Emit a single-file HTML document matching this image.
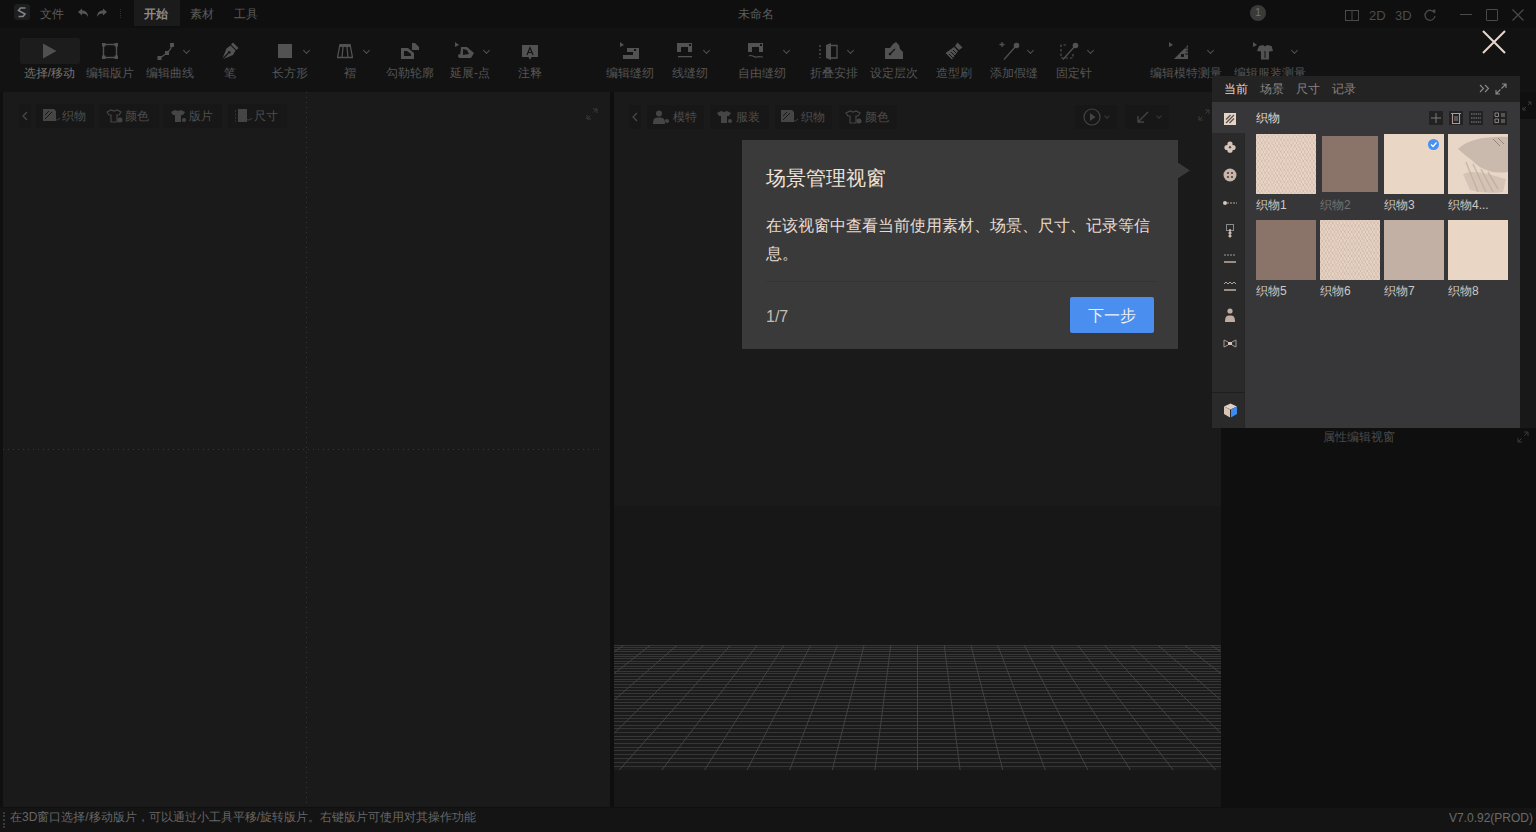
<!DOCTYPE html>
<html><head><meta charset="utf-8">
<style>
*{margin:0;padding:0;box-sizing:border-box}
html,body{width:1536px;height:832px;overflow:hidden;background:#0f0f0f;font-family:"Liberation Sans",sans-serif;position:relative}
.a{position:absolute}
.t{position:absolute;white-space:nowrap;line-height:1}
#title{left:0;top:0;width:1536px;height:27px;background:#0f0f0f}
#toolbar{left:0;top:28px;width:1536px;height:64px;background:#121212}
#lp{left:3px;top:92px;width:607px;height:715px;background:#1a1a1a}
#sep{left:610px;top:92px;width:4px;height:715px;background:#0e0e0e}
#cp{left:614px;top:92px;width:607px;height:715px;background:linear-gradient(#1a1a1a 0,#1a1a1a 414px,#171717 414px,#171717 715px)}
#rp{left:1221px;top:92px;width:315px;height:716px;background:#0f0f0f}
#status{left:0;top:808px;width:1536px;height:24px;background:#141414}
.lbl{font-size:12px;color:#5a5a5a;top:67px;text-align:center;width:90px;margin-left:-45px}
.chev{position:absolute;top:48px;width:5px;height:5px;border-right:1.2px solid #505050;border-bottom:1.2px solid #505050;transform:rotate(45deg)}
.ico{position:absolute}
.c{display:inline-block;width:1em;text-align:center}
</style></head>
<body>
<!-- TITLE BAR -->
<div id="title" class="a">
  <div class="a" style="left:14px;top:4px;width:16px;height:16px;background:#1e1e1e;border-radius:3px"></div>
  <svg class="a" style="left:14px;top:4px" width="16" height="16" viewBox="0 0 16 16"><path d="M11.5 4 H6.5 L4.5 6.5 L11 10 L9 12.5 H4.5" fill="none" stroke="#7e838a" stroke-width="1.7" stroke-linejoin="miter"/></svg>
  <div class="t" style="left:40px;top:8px;font-size:12px;color:#5c5c5c"><span class="c">文</span><span class="c">件</span></div>
  <svg class="a" style="left:77px;top:8px" width="12" height="10" viewBox="0 0 12 10"><path d="M1 4 L5 0.5 V2.5 C9 2.5 11 5 11 9 C10 6.5 8 5.5 5 5.5 V7.5 Z" fill="#555"/></svg>
  <svg class="a" style="left:96px;top:8px" width="12" height="10" viewBox="0 0 12 10"><path d="M11 4 L7 0.5 V2.5 C3 2.5 1 5 1 9 C2 6.5 4 5.5 7 5.5 V7.5 Z" fill="#555"/></svg>
  <div class="a" style="left:120px;top:9px;width:1px;height:9px;border-left:1px dotted #2e2e2e"></div>
  <div class="a" style="left:134px;top:0;width:46px;height:26px;background:#1b1b1b"></div>
  <div class="t" style="left:144px;top:8px;font-size:12px;color:#8a8a8a;font-weight:bold"><span class="c">开</span><span class="c">始</span></div>
  <div class="t" style="left:190px;top:8px;font-size:12px;color:#5a5a5a"><span class="c">素</span><span class="c">材</span></div>
  <div class="t" style="left:234px;top:8px;font-size:12px;color:#5a5a5a"><span class="c">工</span><span class="c">具</span></div>
  <div class="t" style="left:738px;top:8px;font-size:12px;color:#5c5c5c"><span class="c">未</span><span class="c">命</span><span class="c">名</span></div>
  <div class="a" style="left:1250px;top:5px;width:16px;height:16px;border-radius:50%;background:#3a3a3a"></div>
  <div class="t" style="left:1250px;top:7px;width:16px;text-align:center;font-size:11px;color:#707070">1</div>
  <svg class="a" style="left:1345px;top:10px" width="14" height="11" viewBox="0 0 14 11"><rect x="0.5" y="0.5" width="13" height="10" fill="none" stroke="#4a4a4a"/><line x1="7" y1="0.5" x2="7" y2="10.5" stroke="#4a4a4a"/></svg>
  <div class="t" style="left:1369px;top:9px;font-size:13px;color:#4c4c4c">2D</div>
  <div class="t" style="left:1395px;top:9px;font-size:13px;color:#4c4c4c">3D</div>
  <svg class="a" style="left:1423px;top:8px" width="14" height="14" viewBox="0 0 14 14"><path d="M11.5 5 A5 5 0 1 0 12 8" fill="none" stroke="#4a4a4a" stroke-width="1.3"/><path d="M9 2 L12.5 1.5 L12 5.5 Z" fill="#4a4a4a"/></svg>
  <div class="a" style="left:1460px;top:14px;width:12px;height:1px;background:#4a4a4a"></div>
  <div class="a" style="left:1486px;top:9px;width:12px;height:12px;border:1.3px solid #4a4a4a;border-radius:1px"></div>
  <svg class="a" style="left:1512px;top:9px" width="12" height="12" viewBox="0 0 12 12"><path d="M0.5 0.5 L11.5 11.5 M11.5 0.5 L0.5 11.5" stroke="#4a4a4a" stroke-width="1.2"/></svg>
</div>
<!-- TOOLBAR -->
<div id="toolbar" class="a"></div>
<div id="tb" class="a" style="left:0;top:0;width:1536px;height:92px">
  <div class="a" style="left:20px;top:38px;width:60px;height:26px;background:#1c1c1c;border-radius:2px"></div>
  <div class="t lbl" style="left:49.5px;color:#747474"><span class="c">选</span><span class="c">择</span>/<span class="c">移</span><span class="c">动</span></div>
  <svg class="a" style="left:42px;top:43px" width="15" height="16" viewBox="0 0 15 16"><path d="M1 0.5 L14.5 8 L1 15.5 Z" fill="#505050"/></svg>
  <div class="t lbl" style="left:110px;color:#555"><span class="c">编</span><span class="c">辑</span><span class="c">版</span><span class="c">片</span></div>
  <svg class="a" style="left:102px;top:43px" width="16" height="16" viewBox="0 0 16 16"><rect x="1.5" y="1.5" width="13" height="13" fill="none" stroke="#525252" stroke-width="1.4"/><rect x="0" y="0" width="3.5" height="3.5" fill="#525252"/><rect x="12.5" y="0" width="3.5" height="3.5" fill="#525252"/><rect x="0" y="12.5" width="3.5" height="3.5" fill="#525252"/><rect x="12.5" y="12.5" width="3.5" height="3.5" fill="#525252"/></svg>
  <div class="t lbl" style="left:170px;color:#555"><span class="c">编</span><span class="c">辑</span><span class="c">曲</span><span class="c">线</span></div>
  <svg class="a" style="left:157px;top:43px" width="17" height="17" viewBox="0 0 17 17"><path d="M3 15 L10 10 C13 7 15 4 15 2" fill="none" stroke="#525252" stroke-width="1.2"/><rect x="0.5" y="13" width="4" height="4" fill="#525252"/><rect x="8" y="8" width="4" height="4" fill="#525252"/><rect x="13" y="0" width="4" height="4" fill="#525252"/></svg>
  <div class="chev" style="left:184px"></div>
  <div class="t lbl" style="left:230px;color:#555"><span class="c">笔</span></div>
  <svg class="a" style="left:221px;top:42px" width="18" height="18" viewBox="0 0 18 18"><path d="M12 0.5 L17.5 6 L15.5 8 L10 2.5 Z" fill="#525252"/><path d="M9.5 3.5 L14.5 8.5 L12 13 L1 17.5 L5.5 6.5 Z" fill="#525252"/><path d="M1 17.5 L7.5 11" stroke="#131313" stroke-width="1.2"/><circle cx="8.3" cy="10.2" r="1.3" fill="#131313"/></svg>
  <div class="t lbl" style="left:290px;color:#555"><span class="c">长</span><span class="c">方</span><span class="c">形</span></div>
  <div class="a" style="left:278px;top:44px;width:14px;height:14px;background:#525252"></div>
  <div class="chev" style="left:304px"></div>
  <div class="t lbl" style="left:350px;color:#555"><span class="c">褶</span></div>
  <svg class="a" style="left:337px;top:44px" width="16" height="15" viewBox="0 0 16 15"><path d="M3 0.5 H13 L15.5 13.5 H0.5 Z" fill="none" stroke="#525252" stroke-width="1.3"/><rect x="3" y="0" width="10" height="3" fill="#525252"/><path d="M6 3 L5 13.5 M10 3 L11 13.5" stroke="#525252" stroke-width="1.3"/></svg>
  <div class="chev" style="left:364px"></div>
  <div class="t lbl" style="left:410px;color:#555"><span class="c">勾</span><span class="c">勒</span><span class="c">轮</span><span class="c">廓</span></div>
  <svg class="a" style="left:401px;top:43px" width="18" height="16" viewBox="0 0 18 16"><path d="M0 5 H7 L13 10 V16 H0 Z" fill="#525252"/><path d="M3 8 H6 L10 11 V13 H3 Z" fill="#131313"/><path d="M11 0 H14 L18 4 V7 H11 Z" fill="#525252"/></svg>
  <div class="t lbl" style="left:470px;color:#555"><span class="c">延</span><span class="c">展</span>-<span class="c">点</span></div>
  <svg class="a" style="left:455px;top:42px" width="20" height="18" viewBox="0 0 20 18"><path d="M0 0 L4 3 L0 5 Z" fill="#525252"/><path d="M6 5 L12 5 L19 11 L16 16 H5 Z" fill="#525252"/><path d="M8 7 L12 8 L14 12 L8 13 Z" fill="#131313"/><circle cx="5" cy="14" r="2" fill="#525252"/></svg>
  <div class="chev" style="left:484px"></div>
  <div class="t lbl" style="left:530px;color:#555"><span class="c">注</span><span class="c">释</span></div>
  <svg class="a" style="left:522px;top:45px" width="16" height="16" viewBox="0 0 16 16"><path d="M0 0 H16 V12 H9.5 L8 15 L6.5 12 H0 Z" fill="#525252"/><path d="M5 10 L8 2.5 L11 10 M6.2 7.5 H9.8" fill="none" stroke="#131313" stroke-width="1.2"/></svg>
  <div class="t lbl" style="left:630px;color:#555"><span class="c">编</span><span class="c">辑</span><span class="c">缝</span><span class="c">纫</span></div>
  <svg class="a" style="left:620px;top:42px" width="19" height="18" viewBox="0 0 19 18"><path d="M0 0 L4 3 L0 5 Z" fill="#525252"/><path d="M3 6 H19 V17 H3 V13 H13 V10 H7 V6" fill="#525252"/><rect x="14" y="7" width="2" height="2" fill="#131313"/></svg>
  <div class="t lbl" style="left:690px;color:#555"><span class="c">线</span><span class="c">缝</span><span class="c">纫</span></div>
  <svg class="a" style="left:677px;top:43px" width="16" height="16" viewBox="0 0 16 16"><path d="M0 0 H15 V9 H11 V4 H4 V9 H0 Z" fill="#525252"/><rect x="12" y="1" width="2" height="2" fill="#131313"/><rect x="1" y="13" width="14" height="1.3" fill="#525252"/></svg>
  <div class="chev" style="left:704px"></div>
  <div class="t lbl" style="left:762px;color:#555"><span class="c">自</span><span class="c">由</span><span class="c">缝</span><span class="c">纫</span></div>
  <svg class="a" style="left:748px;top:43px" width="16" height="17" viewBox="0 0 16 17"><path d="M0 0 H15 V9 H11 V4 H4 V9 H0 Z" fill="#525252"/><rect x="12" y="1" width="2" height="2" fill="#131313"/><path d="M1 13 C4 11 6 15 9 14 C11 13 13 14 15 14" fill="none" stroke="#525252" stroke-width="1.2"/></svg>
  <div class="chev" style="left:784px"></div>
  <div class="t lbl" style="left:834px;color:#555"><span class="c">折</span><span class="c">叠</span><span class="c">安</span><span class="c">排</span></div>
  <svg class="a" style="left:819px;top:43px" width="19" height="17" viewBox="0 0 19 17"><path d="M1 2 V15" stroke="#525252" stroke-width="1.3" stroke-dasharray="2 2"/><path d="M7 2 L12 0 V17 L7 15 Z" fill="#525252"/><path d="M12 2.5 H18 V15 H12" fill="none" stroke="#525252" stroke-width="1.3"/></svg>
  <div class="chev" style="left:848px"></div>
  <div class="t lbl" style="left:894px;color:#555"><span class="c">设</span><span class="c">定</span><span class="c">层</span><span class="c">次</span></div>
  <svg class="a" style="left:885px;top:42px" width="18" height="18" viewBox="0 0 18 18"><path d="M0 6 H5 L8 2 L11 0 L14 3 L15 7 L18 10 V17 H0 Z" fill="#525252"/><path d="M5 12 L10 7" stroke="#131313" stroke-width="1.3"/><circle cx="5" cy="12" r="1.3" fill="#131313"/></svg>
  <div class="t lbl" style="left:954px;color:#555"><span class="c">造</span><span class="c">型</span><span class="c">刷</span></div>
  <svg class="a" style="left:945px;top:42px" width="18" height="18" viewBox="0 0 18 18"><path d="M12.5 0.5 L17.5 5.5 L14 8 L10 4 Z" fill="#525252"/><path d="M9 5 L13 9 L7 17.5 L0.5 11 Z" fill="#525252"/><path d="M4 12 L8 16 M6 10 L10 14 M8 8 L11 11" stroke="#131313" stroke-width="1"/></svg>
  <div class="t lbl" style="left:1014px;color:#555"><span class="c">添</span><span class="c">加</span><span class="c">假</span><span class="c">缝</span></div>
  <svg class="a" style="left:999px;top:42px" width="21" height="18" viewBox="0 0 21 18"><path d="M3 0 V5 M0.5 2.5 H5.5" stroke="#525252" stroke-width="1.3"/><path d="M5 17.5 L17 4" stroke="#525252" stroke-width="1.2"/><circle cx="17.5" cy="3.5" r="2.8" fill="#525252"/></svg>
  <div class="chev" style="left:1028px"></div>
  <div class="t lbl" style="left:1074px;color:#555"><span class="c">固</span><span class="c">定</span><span class="c">针</span></div>
  <svg class="a" style="left:1060px;top:42px" width="19" height="18" viewBox="0 0 19 18"><path d="M6 3 H1 V16 H13 V10" fill="none" stroke="#525252" stroke-width="1.2" stroke-dasharray="2.5 2"/><path d="M3 17.5 L15 4" stroke="#525252" stroke-width="1.2"/><circle cx="15.5" cy="3.5" r="2.8" fill="#525252"/></svg>
  <div class="chev" style="left:1088px"></div>
  <div class="t lbl" style="left:1186px;color:#555"><span class="c">编</span><span class="c">辑</span><span class="c">模</span><span class="c">特</span><span class="c">测</span><span class="c">量</span></div>
  <svg class="a" style="left:1169px;top:42px" width="19" height="18" viewBox="0 0 19 18"><path d="M0 0 L4 3 L0 5 Z" fill="#525252"/><path d="M5 17 H19 V3 L5 17 Z" fill="#525252"/><path d="M12 12 V15 H15 V12" fill="#131313"/><path d="M19 6 H16 M19 9 H17 M19 12 H16" stroke="#131313" stroke-width="1"/></svg>
  <div class="chev" style="left:1208px"></div>
  <div class="t lbl" style="left:1270px;color:#555"><span class="c">编</span><span class="c">辑</span><span class="c">服</span><span class="c">装</span><span class="c">测</span><span class="c">量</span></div>
  <svg class="a" style="left:1253px;top:42px" width="20" height="18" viewBox="0 0 20 18"><path d="M0 0 L4 3 L0 5 Z" fill="#525252"/><path d="M6 4 L10 3 L12 4.5 L14 3 L18.5 4 L20 9 L16 9.5 V17.5 H8 V9.5 L4 9 Z" fill="#525252"/><path d="M12 9 V16" stroke="#131313" stroke-width="1"/></svg>
  <div class="chev" style="left:1292px"></div>
</div>
<!-- <div class="a" style="left:1212px;top:76px;width:308px;height:26px;background:#232323"></div><div class="t" style="left:1224px;top:83px;font-size:12px;color:#e0d6d0"><span class="c">当</span><span class="c">前</span></div><div class="t" style="left:1260px;top:83px;font-size:12px;color:#8c8480"><span class="c">场</span><span class="c">景</span></div><div class="t" style="left:1296px;top:83px;font-size:12px;color:#8c8480"><span class="c">尺</span><span class="c">寸</span></div><div class="t" style="left:1332px;top:83px;font-size:12px;color:#8c8480"><span class="c">记</span><span class="c">录</span></div><svg class="a" style="left:1479px;top:84px" width="11" height="9" viewBox="0 0 11 9"><path d="M1 1 L4.5 4.5 L1 8 M6 1 L9.5 4.5 L6 8" fill="none" stroke="#8a8a8a" stroke-width="1.1"/></svg><svg class="a" style="left:1495px;top:83px" width="12" height="12" viewBox="0 0 12 12"><path d="M7 1 H11 V5 M11 1 L6.5 5.5 M5 11 H1 V7 M1 11 L5.5 6.5" fill="none" stroke="#8a8a8a" stroke-width="1.1"/></svg><div class="a" style="left:1212px;top:102px;width:308px;height:326px;background:#373739"></div><div class="a" style="left:1212px;top:133px;width:33px;height:295px;background:#2a2a2b;border-right:1px solid #262627"></div><div class="a" style="left:1212px;top:392px;width:33px;height:36px;background:#2a2a2b;border-top:1px solid #1e1e1e;border-right:1px solid #262627"></div><svg class="a" style="left:1224px;top:113px" width="12" height="12" viewBox="0 0 12 12"><rect x="0" y="0" width="12" height="12" fill="#e6d4c4"/><path d="M2 10 L10 2 M2 6.5 L6.5 2 M5.5 10 L10 5.5" stroke="#555" stroke-width="1.3"/></svg><svg class="a" style="left:1224px;top:141px" width="12" height="12" viewBox="0 0 12 12"><circle cx="6" cy="3" r="2.6" fill="#d8c4b8"/><circle cx="3" cy="6.5" r="2.6" fill="#d8c4b8"/><circle cx="9" cy="6.5" r="2.6" fill="#d8c4b8"/><circle cx="6" cy="9.2" r="2.6" fill="#d8c4b8"/><circle cx="6" cy="6.2" r="1.2" fill="#555"/></svg><svg class="a" style="left:1223px;top:168px" width="14" height="14" viewBox="0 0 14 14"><circle cx="7" cy="7" r="6.5" fill="#c8b4a8"/><circle cx="5" cy="5" r="1.1" fill="#444"/><circle cx="9" cy="5" r="1.1" fill="#444"/><circle cx="5" cy="9" r="1.1" fill="#444"/><circle cx="9" cy="9" r="1.1" fill="#444"/></svg><svg class="a" style="left:1222px;top:200px" width="16" height="6" viewBox="0 0 16 6"><circle cx="3" cy="3" r="2" fill="#d8c4b8"/><path d="M5 3 H15" stroke="#b8a498" stroke-width="1" stroke-dasharray="2 1"/></svg><svg class="a" style="left:1226px;top:224px" width="8" height="14" viewBox="0 0 8 14"><rect x="0.5" y="0.5" width="7" height="6" fill="none" stroke="#8a8a8a" stroke-width="1"/><path d="M4 5 V13.5 M2.5 9 H5.5 M2.5 12 H5.5" stroke="#d8c4b8" stroke-width="1.5"/></svg><svg class="a" style="left:1223px;top:253px" width="14" height="11" viewBox="0 0 14 11"><path d="M1 2 H13" stroke="#a89890" stroke-width="1" stroke-dasharray="2 1"/><path d="M1 9 H13" stroke="#d8c4b8" stroke-width="1.3"/></svg><svg class="a" style="left:1223px;top:281px" width="14" height="11" viewBox="0 0 14 11"><path d="M1 3 L3 1 L5 3 L7 1 L9 3 L11 1 L13 3" fill="none" stroke="#b8a498" stroke-width="1"/><path d="M1 9 H13" stroke="#d8c4b8" stroke-width="1.3"/></svg><svg class="a" style="left:1225px;top:308px" width="10" height="14" viewBox="0 0 10 14"><circle cx="5" cy="3" r="2.6" fill="#c0aca0"/><path d="M0 14 C0 8.5 1.5 7.5 5 7.5 C8.5 7.5 10 8.5 10 14 Z" fill="#c0aca0"/></svg><svg class="a" style="left:1223px;top:339px" width="14" height="9" viewBox="0 0 14 9"><path d="M1 1 V8 M13 1 V8 M1 1 L5 3 M1 8 L5 6 M13 1 L9 3 M13 8 L9 6" fill="none" stroke="#a89890" stroke-width="1"/><rect x="5" y="3" width="4" height="3" fill="#d8c4b8"/></svg><svg class="a" style="left:1223px;top:403px" width="15" height="15" viewBox="0 0 15 15"><path d="M7.5 0.5 L14 3.5 L7.5 6.5 L1 3.5 Z" fill="#e0d0c4"/><path d="M1 3.5 V11 L7 14.5 V6.5 Z" fill="#d8c4b4"/><path d="M14 3.5 V11 L8 14.5 V6.5 Z" fill="#3a8cf0"/></svg><div class="t" style="left:1256px;top:112px;font-size:12px;color:#e0d8d2"><span class="c">织</span><span class="c">物</span></div><div class="a" style="left:1429px;top:111px;width:14px;height:14px;background:#222223"></div><div class="a" style="left:1449px;top:111px;width:14px;height:14px;background:#222223"></div><div class="a" style="left:1469px;top:111px;width:14px;height:14px;background:#222223"></div><div class="a" style="left:1493px;top:111px;width:14px;height:14px;background:#222223"></div><svg class="a" style="left:1429px;top:111px" width="14" height="14" viewBox="0 0 14 14"><path d="M7 2 V12 M2 7 H12" stroke="#7a7a7a" stroke-width="1"/></svg><svg class="a" style="left:1449px;top:111px" width="14" height="14" viewBox="0 0 14 14"><path d="M2 2.5 H12 M3.5 2.5 V12.5 H10.5 V2.5" fill="none" stroke="#b09890" stroke-width="1.1"/><rect x="5" y="5" width="4" height="5" fill="#555"/></svg><svg class="a" style="left:1469px;top:111px" width="14" height="14" viewBox="0 0 14 14"><path d="M2 3 H12 M2 7 H12 M2 11 H12" stroke="#888" stroke-width="1" stroke-dasharray="1.5 0.8"/></svg><svg class="a" style="left:1493px;top:111px" width="14" height="14" viewBox="0 0 14 14"><path d="M2 2 H5.5 V5.5 H2 Z M2 8 H5.5 V11.5 H2 Z M8 3 H12 M8 5 H12 M8 9 H12 M8 11 H12" fill="none" stroke="#8a8580" stroke-width="1"/></svg><div class="a" style="left:1256px;top:134px;width:60px;height:60px;background-color:#e8d4c4;background-image:repeating-linear-gradient(60deg,rgba(150,120,110,0.15) 0 1px,transparent 1px 3px),repeating-linear-gradient(-60deg,rgba(150,120,110,0.12) 0 1px,transparent 1px 3px)"></div><div class="t" style="left:1256px;top:199px;font-size:12px;color:#d0c8c2"><span class="c">织</span><span class="c">物</span>1</div><div class="a" style="left:1322px;top:136px;width:56px;height:56px;background-color:#8a746a"></div><div class="t" style="left:1320px;top:199px;font-size:12px;color:#727272"><span class="c">织</span><span class="c">物</span>2</div><div class="a" style="left:1384px;top:134px;width:60px;height:60px;background-color:#ead6c4"></div><div class="t" style="left:1384px;top:199px;font-size:12px;color:#d0c8c2"><span class="c">织</span><span class="c">物</span>3</div><svg class="a" style="left:1448px;top:134px" width="60" height="60" viewBox="0 0 60 60"><rect width="60" height="60" fill="#e8d6c6"/><path d="M10 15 C20 5 40 2 60 3 V38 C45 40 35 36 28 30 C22 24 15 20 10 15 Z" fill="#c4b4a8" opacity="0.85"/><path d="M15 40 C25 35 40 40 58 45 L55 58 C45 60 30 58 22 56 Z" fill="#c8b8ac" opacity="0.6"/><path d="M18 28 L30 58 M25 30 L38 58 M33 35 L45 58 M40 38 L50 55" stroke="#bcaca0" stroke-width="1.5" opacity="0.7"/><path d="M45 5 L52 12 M50 4 L56 10" stroke="#9a8478" stroke-width="1"/></svg><div class="t" style="left:1448px;top:199px;font-size:12px;color:#d0c8c2"><span class="c">织</span><span class="c">物</span>4...</div><div class="a" style="left:1256px;top:220px;width:60px;height:60px;background-color:#8a746a"></div><div class="t" style="left:1256px;top:285px;font-size:12px;color:#d0c8c2"><span class="c">织</span><span class="c">物</span>5</div><div class="a" style="left:1320px;top:220px;width:60px;height:60px;background-color:#e6d2c2;background-image:repeating-linear-gradient(60deg,rgba(150,120,110,0.15) 0 1px,transparent 1px 3px),repeating-linear-gradient(-60deg,rgba(150,120,110,0.12) 0 1px,transparent 1px 3px)"></div><div class="t" style="left:1320px;top:285px;font-size:12px;color:#d0c8c2"><span class="c">织</span><span class="c">物</span>6</div><div class="a" style="left:1384px;top:220px;width:60px;height:60px;background-color:#c2b0a4"></div><div class="t" style="left:1384px;top:285px;font-size:12px;color:#d0c8c2"><span class="c">织</span><span class="c">物</span>7</div><div class="a" style="left:1448px;top:220px;width:60px;height:60px;background-color:#ead6c4"></div><div class="t" style="left:1448px;top:285px;font-size:12px;color:#d0c8c2"><span class="c">织</span><span class="c">物</span>8</div><div class="a" style="left:1428px;top:139px;width:11px;height:11px;border-radius:50%;background:#4a90f0"></div><svg class="a" style="left:1428px;top:139px" width="11" height="11" viewBox="0 0 11 11"><path d="M3 5.5 L5 7.5 L8.5 3.5" fill="none" stroke="#fff" stroke-width="1.2"/></svg>S -->
<div id="lp" class="a"><div class="a" style="left:16px;top:12px;width:12px;height:24px;background:#171717"></div><svg class="a" style="left:19px;top:19px" width="6" height="10" viewBox="0 0 6 10"><path d="M5 1 L1 5 L5 9" fill="none" stroke="#4a4a4a" stroke-width="1.2"/></svg><div class="a" style="left:33px;top:12px;width:58px;height:24px;background:#171717;border-radius:2px"></div><svg class="a" style="left:40px;top:17px" width="18" height="14" viewBox="0 0 18 14"><path d="M0 0 H11 L13 2 V12 H0 Z" fill="#454545"/><path d="M2 10 L9 3 M2 6 L6 2" stroke="#171717" stroke-width="1"/><path d="M10 12 C12 9 13 13 17 9" fill="none" stroke="#454545" stroke-width="1"/></svg><div class="t" style="left:59px;top:18px;font-size:12px;color:#4e4e4e"><span class="c">织</span><span class="c">物</span></div><div class="a" style="left:96px;top:12px;width:60px;height:24px;background:#171717;border-radius:2px"></div><svg class="a" style="left:103px;top:17px" width="18" height="14" viewBox="0 0 18 14"><path d="M1 3 L5 1 L8 2 L11 1 L15 3 L13 6 H11 V13 H5 V6 H3 Z" fill="none" stroke="#454545" stroke-width="1.2"/><circle cx="14" cy="11" r="2.5" fill="#454545"/></svg><div class="t" style="left:122px;top:18px;font-size:12px;color:#4e4e4e"><span class="c">颜</span><span class="c">色</span></div><div class="a" style="left:160px;top:12px;width:59px;height:24px;background:#171717;border-radius:2px"></div><svg class="a" style="left:167px;top:17px" width="18" height="14" viewBox="0 0 18 14"><path d="M1 3 L5 1 L8 2 L11 1 L15 3 L13 6 H11 V13 H5 V6 H3 Z" fill="#454545"/><circle cx="14" cy="11" r="2" fill="#454545"/></svg><div class="t" style="left:186px;top:18px;font-size:12px;color:#4e4e4e"><span class="c">版</span><span class="c">片</span></div><div class="a" style="left:225px;top:12px;width:59px;height:24px;background:#171717;border-radius:2px"></div><svg class="a" style="left:232px;top:17px" width="18" height="14" viewBox="0 0 18 14"><path d="M0 1 V13" stroke="#454545" stroke-dasharray="2 1.5" stroke-width="1.2"/><path d="M3 0 H12 V13 H3 Z" fill="#454545"/><path d="M11 12 C13 9 14 13 17 9" fill="none" stroke="#454545" stroke-width="1"/></svg><div class="t" style="left:251px;top:18px;font-size:12px;color:#4e4e4e"><span class="c">尺</span><span class="c">寸</span></div><svg class="a" style="left:303px;top:0" width="1" height="715" shape-rendering="crispEdges"><line x1="0.5" y1="0" x2="0.5" y2="715" stroke="#363636" stroke-dasharray="1 4"/></svg><svg class="a" style="left:0;top:357px" width="598" height="1" shape-rendering="crispEdges"><line x1="0" y1="0.5" x2="598" y2="0.5" stroke="#363636" stroke-dasharray="1 4"/></svg><svg class="a" style="left:583px;top:16px" width="12" height="12" viewBox="0 0 12 12"><path d="M7 1 H11 V5 M11 1 L7.5 4.5 M5 11 H1 V7 M1 11 L4.5 7.5" fill="none" stroke="#3a3a3a" stroke-width="1"/></svg></div>
<div id="sep" class="a"></div>
<div id="cp" class="a"><div class="a" style="left:0;top:1px;width:607px;height:40px"><div class="a" style="left:15px;top:12px;width:12px;height:24px;background:#171717"></div><svg class="a" style="left:18px;top:19px" width="6" height="10" viewBox="0 0 6 10"><path d="M5 1 L1 5 L5 9" fill="none" stroke="#4a4a4a" stroke-width="1.2"/></svg><div class="a" style="left:33px;top:12px;width:57px;height:24px;background:#171717;border-radius:2px"></div><svg class="a" style="left:39px;top:17px" width="18" height="14" viewBox="0 0 18 14"><circle cx="6" cy="3.5" r="3" fill="#454545"/><path d="M0 14 C0 8 2 7.5 6 7.5 C10 7.5 12 8 12 14 Z" fill="#454545"/><circle cx="14" cy="11" r="2" fill="#454545"/></svg><div class="t" style="left:59px;top:18px;font-size:12px;color:#4e4e4e"><span class="c">模</span><span class="c">特</span></div><div class="a" style="left:96px;top:12px;width:59px;height:24px;background:#171717;border-radius:2px"></div><svg class="a" style="left:102px;top:17px" width="18" height="14" viewBox="0 0 18 14"><path d="M1 3 L5 1 L8 2 L11 1 L15 3 L13 6 H11 V13 H5 V6 H3 Z" fill="#454545"/><circle cx="14" cy="11" r="2" fill="#454545"/></svg><div class="t" style="left:122px;top:18px;font-size:12px;color:#4e4e4e"><span class="c">服</span><span class="c">装</span></div><div class="a" style="left:161px;top:12px;width:57px;height:24px;background:#171717;border-radius:2px"></div><svg class="a" style="left:167px;top:17px" width="18" height="14" viewBox="0 0 18 14"><path d="M0 0 H11 L13 2 V12 H0 Z" fill="#454545"/><path d="M2 10 L9 3 M2 6 L6 2" stroke="#171717" stroke-width="1"/><path d="M10 12 C12 9 13 13 17 9" fill="none" stroke="#454545" stroke-width="1"/></svg><div class="t" style="left:187px;top:18px;font-size:12px;color:#4e4e4e"><span class="c">织</span><span class="c">物</span></div><div class="a" style="left:225px;top:12px;width:58px;height:24px;background:#171717;border-radius:2px"></div><svg class="a" style="left:231px;top:17px" width="18" height="14" viewBox="0 0 18 14"><path d="M1 3 L5 1 L8 2 L11 1 L15 3 L13 6 H11 V13 H5 V6 H3 Z" fill="none" stroke="#454545" stroke-width="1.2"/><circle cx="14" cy="11" r="2.5" fill="#454545"/></svg><div class="t" style="left:251px;top:18px;font-size:12px;color:#4e4e4e"><span class="c">颜</span><span class="c">色</span></div><div class="a" style="left:461px;top:12px;width:42px;height:24px;background:#171717;border-radius:2px"></div><svg class="a" style="left:469px;top:15px" width="18" height="18" viewBox="0 0 18 18"><circle cx="9" cy="9" r="8" fill="none" stroke="#444" stroke-width="1.2"/><path d="M7 5 L12.5 9 L7 13 Z" fill="#444"/></svg><div class="chev" style="left:491px;top:21px;width:4px;height:4px;border-color:#3a3a3a"></div><div class="a" style="left:511px;top:12px;width:44px;height:24px;background:#171717;border-radius:2px"></div><svg class="a" style="left:522px;top:17px" width="14" height="14" viewBox="0 0 14 14"><path d="M12 2 L2.5 11.5 M2 6 V12 H8" fill="none" stroke="#444" stroke-width="1.4"/></svg><div class="chev" style="left:543px;top:21px;width:4px;height:4px;border-color:#3a3a3a"></div><svg class="a" style="left:584px;top:16px" width="12" height="12" viewBox="0 0 12 12"><path d="M7 1 H11 V5 M11 1 L7.5 4.5 M5 11 H1 V7 M1 11 L4.5 7.5" fill="none" stroke="#3a3a3a" stroke-width="1"/></svg></div><svg class="a" style="left:0;top:553px" width="607" height="125" viewBox="0 0 607 125" shape-rendering="crispEdges"><rect x="0" y="0" width="607" height="125" fill="#1b1b1b"/><rect x="0" y="0" width="607" height="1" fill="#363636"/><rect x="0" y="2" width="607" height="1" fill="#363636"/><rect x="0" y="4" width="607" height="1" fill="#363636"/><rect x="0" y="6" width="607" height="1" fill="#363636"/><rect x="0" y="9" width="607" height="1" fill="#363636"/><rect x="0" y="11" width="607" height="1" fill="#363636"/><rect x="0" y="13" width="607" height="1" fill="#363636"/><rect x="0" y="16" width="607" height="1" fill="#363636"/><rect x="0" y="18" width="607" height="1" fill="#363636"/><rect x="0" y="21" width="607" height="1" fill="#363636"/><rect x="0" y="23" width="607" height="1" fill="#363636"/><rect x="0" y="26" width="607" height="1" fill="#363636"/><rect x="0" y="28" width="607" height="1" fill="#363636"/><rect x="0" y="31" width="607" height="1" fill="#363636"/><rect x="0" y="34" width="607" height="1" fill="#363636"/><rect x="0" y="36" width="607" height="1" fill="#363636"/><rect x="0" y="39" width="607" height="1" fill="#363636"/><rect x="0" y="42" width="607" height="1" fill="#363636"/><rect x="0" y="45" width="607" height="1" fill="#363636"/><rect x="0" y="48" width="607" height="1" fill="#363636"/><rect x="0" y="51" width="607" height="1" fill="#363636"/><rect x="0" y="54" width="607" height="1" fill="#363636"/><rect x="0" y="57" width="607" height="1" fill="#363636"/><rect x="0" y="60" width="607" height="1" fill="#363636"/><rect x="0" y="63" width="607" height="1" fill="#363636"/><rect x="0" y="66" width="607" height="1" fill="#363636"/><rect x="0" y="70" width="607" height="1" fill="#363636"/><rect x="0" y="73" width="607" height="1" fill="#363636"/><rect x="0" y="76" width="607" height="1" fill="#363636"/><rect x="0" y="80" width="607" height="1" fill="#363636"/><rect x="0" y="83" width="607" height="1" fill="#363636"/><rect x="0" y="87" width="607" height="1" fill="#363636"/><rect x="0" y="91" width="607" height="1" fill="#363636"/><rect x="0" y="94" width="607" height="1" fill="#363636"/><rect x="0" y="98" width="607" height="1" fill="#363636"/><rect x="0" y="102" width="607" height="1" fill="#363636"/><rect x="0" y="105" width="607" height="1" fill="#363636"/><rect x="0" y="109" width="607" height="1" fill="#363636"/><rect x="0" y="113" width="607" height="1" fill="#363636"/><rect x="0" y="117" width="607" height="1" fill="#363636"/><rect x="0" y="121" width="607" height="1" fill="#363636"/></svg><svg class="a" style="left:0;top:553px" width="607" height="125" viewBox="0 0 607 125"><line x1="-497.6" y1="0" x2="-974.5" y2="125" stroke="#424242" stroke-width="1"/><line x1="-470.9" y1="0" x2="-931.9" y2="125" stroke="#424242" stroke-width="1"/><line x1="-444.2" y1="0" x2="-889.3" y2="125" stroke="#424242" stroke-width="1"/><line x1="-417.5" y1="0" x2="-846.7" y2="125" stroke="#424242" stroke-width="1"/><line x1="-390.8" y1="0" x2="-804.1" y2="125" stroke="#424242" stroke-width="1"/><line x1="-364.1" y1="0" x2="-761.5" y2="125" stroke="#424242" stroke-width="1"/><line x1="-337.4" y1="0" x2="-718.9" y2="125" stroke="#424242" stroke-width="1"/><line x1="-310.7" y1="0" x2="-676.3" y2="125" stroke="#424242" stroke-width="1"/><line x1="-284.0" y1="0" x2="-633.7" y2="125" stroke="#424242" stroke-width="1"/><line x1="-257.3" y1="0" x2="-591.1" y2="125" stroke="#424242" stroke-width="1"/><line x1="-230.6" y1="0" x2="-548.5" y2="125" stroke="#424242" stroke-width="1"/><line x1="-203.9" y1="0" x2="-505.9" y2="125" stroke="#424242" stroke-width="1"/><line x1="-177.2" y1="0" x2="-463.3" y2="125" stroke="#424242" stroke-width="1"/><line x1="-150.5" y1="0" x2="-420.7" y2="125" stroke="#424242" stroke-width="1"/><line x1="-123.8" y1="0" x2="-378.1" y2="125" stroke="#424242" stroke-width="1"/><line x1="-97.1" y1="0" x2="-335.5" y2="125" stroke="#424242" stroke-width="1"/><line x1="-70.4" y1="0" x2="-292.9" y2="125" stroke="#424242" stroke-width="1"/><line x1="-43.7" y1="0" x2="-250.3" y2="125" stroke="#424242" stroke-width="1"/><line x1="-17.0" y1="0" x2="-207.7" y2="125" stroke="#424242" stroke-width="1"/><line x1="9.8" y1="0" x2="-165.1" y2="125" stroke="#424242" stroke-width="1"/><line x1="36.5" y1="0" x2="-122.5" y2="125" stroke="#424242" stroke-width="1"/><line x1="63.2" y1="0" x2="-79.9" y2="125" stroke="#424242" stroke-width="1"/><line x1="89.9" y1="0" x2="-37.3" y2="125" stroke="#424242" stroke-width="1"/><line x1="116.6" y1="0" x2="5.3" y2="125" stroke="#424242" stroke-width="1"/><line x1="143.3" y1="0" x2="47.9" y2="125" stroke="#424242" stroke-width="1"/><line x1="170.0" y1="0" x2="90.5" y2="125" stroke="#424242" stroke-width="1"/><line x1="196.7" y1="0" x2="133.1" y2="125" stroke="#424242" stroke-width="1"/><line x1="223.4" y1="0" x2="175.7" y2="125" stroke="#424242" stroke-width="1"/><line x1="250.1" y1="0" x2="218.3" y2="125" stroke="#424242" stroke-width="1"/><line x1="276.8" y1="0" x2="260.9" y2="125" stroke="#424242" stroke-width="1"/><line x1="303.5" y1="0" x2="303.5" y2="125" stroke="#424242" stroke-width="1"/><line x1="330.2" y1="0" x2="346.1" y2="125" stroke="#424242" stroke-width="1"/><line x1="356.9" y1="0" x2="388.7" y2="125" stroke="#424242" stroke-width="1"/><line x1="383.6" y1="0" x2="431.3" y2="125" stroke="#424242" stroke-width="1"/><line x1="410.3" y1="0" x2="473.9" y2="125" stroke="#424242" stroke-width="1"/><line x1="437.0" y1="0" x2="516.5" y2="125" stroke="#424242" stroke-width="1"/><line x1="463.7" y1="0" x2="559.1" y2="125" stroke="#424242" stroke-width="1"/><line x1="490.4" y1="0" x2="601.7" y2="125" stroke="#424242" stroke-width="1"/><line x1="517.1" y1="0" x2="644.3" y2="125" stroke="#424242" stroke-width="1"/><line x1="543.8" y1="0" x2="686.9" y2="125" stroke="#424242" stroke-width="1"/><line x1="570.5" y1="0" x2="729.5" y2="125" stroke="#424242" stroke-width="1"/><line x1="597.2" y1="0" x2="772.1" y2="125" stroke="#424242" stroke-width="1"/><line x1="624.0" y1="0" x2="814.7" y2="125" stroke="#424242" stroke-width="1"/><line x1="650.7" y1="0" x2="857.3" y2="125" stroke="#424242" stroke-width="1"/><line x1="677.4" y1="0" x2="899.9" y2="125" stroke="#424242" stroke-width="1"/><line x1="704.1" y1="0" x2="942.5" y2="125" stroke="#424242" stroke-width="1"/><line x1="730.8" y1="0" x2="985.1" y2="125" stroke="#424242" stroke-width="1"/><line x1="757.5" y1="0" x2="1027.7" y2="125" stroke="#424242" stroke-width="1"/><line x1="784.2" y1="0" x2="1070.3" y2="125" stroke="#424242" stroke-width="1"/><line x1="810.9" y1="0" x2="1112.9" y2="125" stroke="#424242" stroke-width="1"/><line x1="837.6" y1="0" x2="1155.5" y2="125" stroke="#424242" stroke-width="1"/><line x1="864.3" y1="0" x2="1198.1" y2="125" stroke="#424242" stroke-width="1"/><line x1="891.0" y1="0" x2="1240.7" y2="125" stroke="#424242" stroke-width="1"/><line x1="917.7" y1="0" x2="1283.3" y2="125" stroke="#424242" stroke-width="1"/><line x1="944.4" y1="0" x2="1325.9" y2="125" stroke="#424242" stroke-width="1"/><line x1="971.1" y1="0" x2="1368.5" y2="125" stroke="#424242" stroke-width="1"/><line x1="997.8" y1="0" x2="1411.1" y2="125" stroke="#424242" stroke-width="1"/><line x1="1024.5" y1="0" x2="1453.7" y2="125" stroke="#424242" stroke-width="1"/><line x1="1051.2" y1="0" x2="1496.3" y2="125" stroke="#424242" stroke-width="1"/><line x1="1077.9" y1="0" x2="1538.9" y2="125" stroke="#424242" stroke-width="1"/><line x1="1104.6" y1="0" x2="1581.5" y2="125" stroke="#424242" stroke-width="1"/></svg></div>
<div id="rp" class="a"><div class="a" style="left:299px;top:27px;width:16px;height:309px;background:#181818"></div><svg class="a" style="left:301px;top:9px" width="10" height="10" viewBox="0 0 10 10"><path d="M6 1 H9 V4 M9 1 L6 4 M4 9 H1 V6 M1 9 L4 6" fill="none" stroke="#3a3a3a" stroke-width="1"/></svg><div class="t" style="left:102px;top:339px;font-size:12px;color:#4a4a4a"><span class="c">属</span><span class="c">性</span><span class="c">编</span><span class="c">辑</span><span class="c">视</span><span class="c">窗</span></div><svg class="a" style="left:296px;top:339px" width="12" height="12" viewBox="0 0 12 12"><path d="M7 1 H11 V5 M11 1 L7.5 4.5 M5 11 H1 V7 M1 11 L4.5 7.5" fill="none" stroke="#3a3a3a" stroke-width="1"/></svg></div>
<div id="status" class="a">
  <div class="a" style="left:3px;top:4px;width:1px;height:16px;border-left:2px dotted #3a3a3a"></div>
  <div class="t" style="left:10px;top:3px;font-size:12px;color:#666"><span class="c">在</span>3D<span class="c">窗</span><span class="c">口</span><span class="c">选</span><span class="c">择</span>/<span class="c">移</span><span class="c">动</span><span class="c">版</span><span class="c">片</span><span class="c">，</span><span class="c">可</span><span class="c">以</span><span class="c">通</span><span class="c">过</span><span class="c">小</span><span class="c">工</span><span class="c">具</span><span class="c">平</span><span class="c">移</span>/<span class="c">旋</span><span class="c">转</span><span class="c">版</span><span class="c">片</span><span class="c">。</span><span class="c">右</span><span class="c">键</span><span class="c">版</span><span class="c">片</span><span class="c">可</span><span class="c">使</span><span class="c">用</span><span class="c">对</span><span class="c">其</span><span class="c">操</span><span class="c">作</span><span class="c">功</span><span class="c">能</span></div>
  <div class="t" style="right:3px;top:4px;font-size:12px;color:#6a6a6a">V7.0.92(PROD)</div>
</div>
<div class="a" style="left:742px;top:140px;width:436px;height:209px;background:#3a3a3a"></div><svg class="a" style="left:1177px;top:162px" width="13" height="17" viewBox="0 0 13 17"><path d="M0 0 L13 8.5 L0 17 Z" fill="#3a3a3a"/></svg><div class="t" style="left:766px;top:168px;font-size:20px;color:#eee2d8"><span class="c">场</span><span class="c">景</span><span class="c">管</span><span class="c">理</span><span class="c">视</span><span class="c">窗</span></div><div class="a" style="left:766px;top:212px;width:390px;font-size:16px;line-height:28px;color:#e8dcd2"><span class="c">在</span><span class="c">该</span><span class="c">视</span><span class="c">窗</span><span class="c">中</span><span class="c">查</span><span class="c">看</span><span class="c">当</span><span class="c">前</span><span class="c">使</span><span class="c">用</span><span class="c">素</span><span class="c">材</span><span class="c">、</span><span class="c">场</span><span class="c">景</span><span class="c">、</span><span class="c">尺</span><span class="c">寸</span><span class="c">、</span><span class="c">记</span><span class="c">录</span><span class="c">等</span><span class="c">信</span><span class="c">息</span><span class="c">。</span></div><div class="a" style="left:766px;top:281px;width:390px;height:1px;background:#343434"></div><div class="t" style="left:766px;top:309px;font-size:16px;color:#c4bcb6">1/7</div><div class="a" style="left:1070px;top:297px;width:84px;height:36px;background:#4a8ef0;border-radius:2px"></div><div class="t" style="left:1070px;top:308px;width:84px;text-align:center;font-size:16px;color:#f0f0f0"><span class="c">下</span><span class="c">一</span><span class="c">步</span></div><svg class="a" style="left:1482px;top:30px" width="24" height="24" viewBox="0 0 24 24"><path d="M1 1 L23 23 M23 1 L1 23" stroke="#e8d8cc" stroke-width="2"/></svg><div class="a" style="left:1212px;top:76px;width:308px;height:26px;background:#232323"></div><div class="t" style="left:1224px;top:83px;font-size:12px;color:#e0d6d0"><span class="c">当</span><span class="c">前</span></div><div class="t" style="left:1260px;top:83px;font-size:12px;color:#8c8480"><span class="c">场</span><span class="c">景</span></div><div class="t" style="left:1296px;top:83px;font-size:12px;color:#8c8480"><span class="c">尺</span><span class="c">寸</span></div><div class="t" style="left:1332px;top:83px;font-size:12px;color:#8c8480"><span class="c">记</span><span class="c">录</span></div><svg class="a" style="left:1479px;top:84px" width="11" height="9" viewBox="0 0 11 9"><path d="M1 1 L4.5 4.5 L1 8 M6 1 L9.5 4.5 L6 8" fill="none" stroke="#8a8a8a" stroke-width="1.1"/></svg><svg class="a" style="left:1495px;top:83px" width="12" height="12" viewBox="0 0 12 12"><path d="M7 1 H11 V5 M11 1 L6.5 5.5 M5 11 H1 V7 M1 11 L5.5 6.5" fill="none" stroke="#8a8a8a" stroke-width="1.1"/></svg><div class="a" style="left:1212px;top:102px;width:308px;height:326px;background:#373739"></div><div class="a" style="left:1212px;top:133px;width:33px;height:295px;background:#2a2a2b;border-right:1px solid #262627"></div><div class="a" style="left:1212px;top:392px;width:33px;height:36px;background:#2a2a2b;border-top:1px solid #1e1e1e;border-right:1px solid #262627"></div><svg class="a" style="left:1224px;top:113px" width="12" height="12" viewBox="0 0 12 12"><rect x="0" y="0" width="12" height="12" fill="#e6d4c4"/><path d="M2 10 L10 2 M2 6.5 L6.5 2 M5.5 10 L10 5.5" stroke="#555" stroke-width="1.3"/></svg><svg class="a" style="left:1224px;top:141px" width="12" height="12" viewBox="0 0 12 12"><circle cx="6" cy="3" r="2.6" fill="#d8c4b8"/><circle cx="3" cy="6.5" r="2.6" fill="#d8c4b8"/><circle cx="9" cy="6.5" r="2.6" fill="#d8c4b8"/><circle cx="6" cy="9.2" r="2.6" fill="#d8c4b8"/><circle cx="6" cy="6.2" r="1.2" fill="#555"/></svg><svg class="a" style="left:1223px;top:168px" width="14" height="14" viewBox="0 0 14 14"><circle cx="7" cy="7" r="6.5" fill="#c8b4a8"/><circle cx="5" cy="5" r="1.1" fill="#444"/><circle cx="9" cy="5" r="1.1" fill="#444"/><circle cx="5" cy="9" r="1.1" fill="#444"/><circle cx="9" cy="9" r="1.1" fill="#444"/></svg><svg class="a" style="left:1222px;top:200px" width="16" height="6" viewBox="0 0 16 6"><circle cx="3" cy="3" r="2" fill="#d8c4b8"/><path d="M5 3 H15" stroke="#b8a498" stroke-width="1" stroke-dasharray="2 1"/></svg><svg class="a" style="left:1226px;top:224px" width="8" height="14" viewBox="0 0 8 14"><rect x="0.5" y="0.5" width="7" height="6" fill="none" stroke="#8a8a8a" stroke-width="1"/><path d="M4 5 V13.5 M2.5 9 H5.5 M2.5 12 H5.5" stroke="#d8c4b8" stroke-width="1.5"/></svg><svg class="a" style="left:1223px;top:253px" width="14" height="11" viewBox="0 0 14 11"><path d="M1 2 H13" stroke="#a89890" stroke-width="1" stroke-dasharray="2 1"/><path d="M1 9 H13" stroke="#d8c4b8" stroke-width="1.3"/></svg><svg class="a" style="left:1223px;top:281px" width="14" height="11" viewBox="0 0 14 11"><path d="M1 3 L3 1 L5 3 L7 1 L9 3 L11 1 L13 3" fill="none" stroke="#b8a498" stroke-width="1"/><path d="M1 9 H13" stroke="#d8c4b8" stroke-width="1.3"/></svg><svg class="a" style="left:1225px;top:308px" width="10" height="14" viewBox="0 0 10 14"><circle cx="5" cy="3" r="2.6" fill="#c0aca0"/><path d="M0 14 C0 8.5 1.5 7.5 5 7.5 C8.5 7.5 10 8.5 10 14 Z" fill="#c0aca0"/></svg><svg class="a" style="left:1223px;top:339px" width="14" height="9" viewBox="0 0 14 9"><path d="M1 1 V8 M13 1 V8 M1 1 L5 3 M1 8 L5 6 M13 1 L9 3 M13 8 L9 6" fill="none" stroke="#a89890" stroke-width="1"/><rect x="5" y="3" width="4" height="3" fill="#d8c4b8"/></svg><svg class="a" style="left:1223px;top:403px" width="15" height="15" viewBox="0 0 15 15"><path d="M7.5 0.5 L14 3.5 L7.5 6.5 L1 3.5 Z" fill="#e0d0c4"/><path d="M1 3.5 V11 L7 14.5 V6.5 Z" fill="#d8c4b4"/><path d="M14 3.5 V11 L8 14.5 V6.5 Z" fill="#3a8cf0"/></svg><div class="t" style="left:1256px;top:112px;font-size:12px;color:#e0d8d2"><span class="c">织</span><span class="c">物</span></div><div class="a" style="left:1429px;top:111px;width:14px;height:14px;background:#222223"></div><div class="a" style="left:1449px;top:111px;width:14px;height:14px;background:#222223"></div><div class="a" style="left:1469px;top:111px;width:14px;height:14px;background:#222223"></div><div class="a" style="left:1493px;top:111px;width:14px;height:14px;background:#222223"></div><svg class="a" style="left:1429px;top:111px" width="14" height="14" viewBox="0 0 14 14"><path d="M7 2 V12 M2 7 H12" stroke="#7a7a7a" stroke-width="1"/></svg><svg class="a" style="left:1449px;top:111px" width="14" height="14" viewBox="0 0 14 14"><path d="M2 2.5 H12 M3.5 2.5 V12.5 H10.5 V2.5" fill="none" stroke="#b09890" stroke-width="1.1"/><rect x="5" y="5" width="4" height="5" fill="#555"/></svg><svg class="a" style="left:1469px;top:111px" width="14" height="14" viewBox="0 0 14 14"><path d="M2 3 H12 M2 7 H12 M2 11 H12" stroke="#888" stroke-width="1" stroke-dasharray="1.5 0.8"/></svg><svg class="a" style="left:1493px;top:111px" width="14" height="14" viewBox="0 0 14 14"><path d="M2 2 H5.5 V5.5 H2 Z M2 8 H5.5 V11.5 H2 Z M8 3 H12 M8 5 H12 M8 9 H12 M8 11 H12" fill="none" stroke="#8a8580" stroke-width="1"/></svg><div class="a" style="left:1256px;top:134px;width:60px;height:60px;background-color:#e8d4c4;background-image:repeating-linear-gradient(60deg,rgba(150,120,110,0.15) 0 1px,transparent 1px 3px),repeating-linear-gradient(-60deg,rgba(150,120,110,0.12) 0 1px,transparent 1px 3px)"></div><div class="t" style="left:1256px;top:199px;font-size:12px;color:#d0c8c2"><span class="c">织</span><span class="c">物</span>1</div><div class="a" style="left:1322px;top:136px;width:56px;height:56px;background-color:#8a746a"></div><div class="t" style="left:1320px;top:199px;font-size:12px;color:#727272"><span class="c">织</span><span class="c">物</span>2</div><div class="a" style="left:1384px;top:134px;width:60px;height:60px;background-color:#ead6c4"></div><div class="t" style="left:1384px;top:199px;font-size:12px;color:#d0c8c2"><span class="c">织</span><span class="c">物</span>3</div><svg class="a" style="left:1448px;top:134px" width="60" height="60" viewBox="0 0 60 60"><rect width="60" height="60" fill="#e8d6c6"/><path d="M10 15 C20 5 40 2 60 3 V38 C45 40 35 36 28 30 C22 24 15 20 10 15 Z" fill="#c4b4a8" opacity="0.85"/><path d="M15 40 C25 35 40 40 58 45 L55 58 C45 60 30 58 22 56 Z" fill="#c8b8ac" opacity="0.6"/><path d="M18 28 L30 58 M25 30 L38 58 M33 35 L45 58 M40 38 L50 55" stroke="#bcaca0" stroke-width="1.5" opacity="0.7"/><path d="M45 5 L52 12 M50 4 L56 10" stroke="#9a8478" stroke-width="1"/></svg><div class="t" style="left:1448px;top:199px;font-size:12px;color:#d0c8c2"><span class="c">织</span><span class="c">物</span>4...</div><div class="a" style="left:1256px;top:220px;width:60px;height:60px;background-color:#8a746a"></div><div class="t" style="left:1256px;top:285px;font-size:12px;color:#d0c8c2"><span class="c">织</span><span class="c">物</span>5</div><div class="a" style="left:1320px;top:220px;width:60px;height:60px;background-color:#e6d2c2;background-image:repeating-linear-gradient(60deg,rgba(150,120,110,0.15) 0 1px,transparent 1px 3px),repeating-linear-gradient(-60deg,rgba(150,120,110,0.12) 0 1px,transparent 1px 3px)"></div><div class="t" style="left:1320px;top:285px;font-size:12px;color:#d0c8c2"><span class="c">织</span><span class="c">物</span>6</div><div class="a" style="left:1384px;top:220px;width:60px;height:60px;background-color:#c2b0a4"></div><div class="t" style="left:1384px;top:285px;font-size:12px;color:#d0c8c2"><span class="c">织</span><span class="c">物</span>7</div><div class="a" style="left:1448px;top:220px;width:60px;height:60px;background-color:#ead6c4"></div><div class="t" style="left:1448px;top:285px;font-size:12px;color:#d0c8c2"><span class="c">织</span><span class="c">物</span>8</div><div class="a" style="left:1428px;top:139px;width:11px;height:11px;border-radius:50%;background:#4a90f0"></div><svg class="a" style="left:1428px;top:139px" width="11" height="11" viewBox="0 0 11 11"><path d="M3 5.5 L5 7.5 L8.5 3.5" fill="none" stroke="#fff" stroke-width="1.2"/></svg>
</body></html>
